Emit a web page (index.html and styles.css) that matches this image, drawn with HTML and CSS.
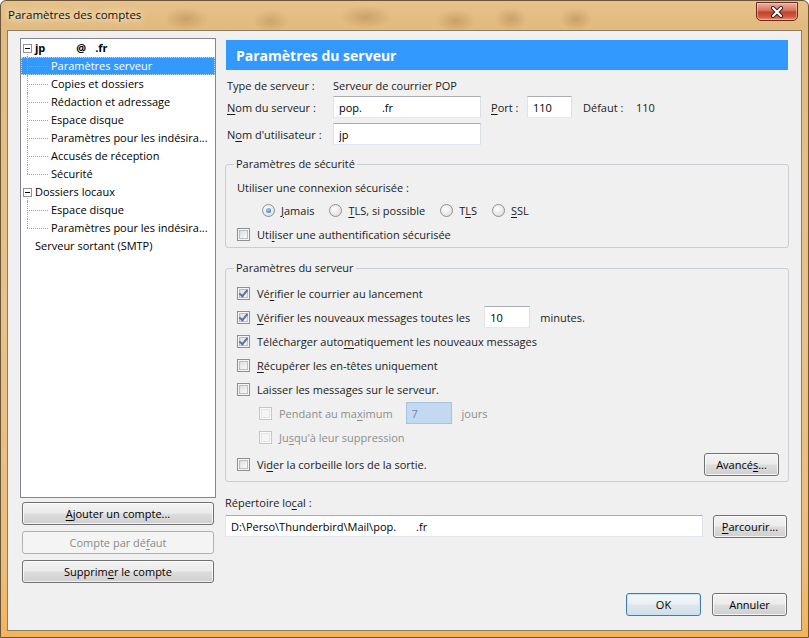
FILE: index.html
```html
<!DOCTYPE html>
<html lang="fr">
<head>
  <meta charset="UTF-8" />
  <title>Paramètres des comptes</title>
  <link rel="stylesheet" href="styles.css">
</head>
<body>
  <div class="window">
    <!-- barre de titre -->
    <div class="titlebar">
      <span class="title">Paramètres des comptes</span>
      <span class="close">
        <svg width="14" height="12" viewBox="0 0 14 12">
          <path d="M3 2 L11 10 M11 2 L3 10" stroke="#3a1a14" stroke-width="4" stroke-linecap="round"/>
          <path d="M3 2 L11 10 M11 2 L3 10" stroke="#fff" stroke-width="2.2" stroke-linecap="round"/>
        </svg>
      </span>
    </div>

    <div class="client">
      <!-- colonne de gauche : arbre des comptes -->
      <div class="side">
        <div class="tree">
          <div class="node account"><span class="toggle"></span>jp<span class="blank-name"></span>@<span class="blank-dom"></span>.fr</div>
          <ul class="children">
            <li class="selected">Paramètres serveur</li>
            <li>Copies et dossiers</li>
            <li>Rédaction et adressage</li>
            <li>Espace disque</li>
            <li>Paramètres pour les indésira...</li>
            <li>Accusés de réception</li>
            <li>Sécurité</li>
          </ul>
          <div class="node"><span class="toggle"></span>Dossiers locaux</div>
          <ul class="children">
            <li>Espace disque</li>
            <li>Paramètres pour les indésira...</li>
          </ul>
          <div class="node leaf">Serveur sortant (SMTP)</div>
        </div>
        <button class="btn side-btn first"><u>A</u>jouter un compte...</button>
        <button class="btn side-btn" disabled>Compte par dé<u>f</u>aut</button>
        <button class="btn side-btn">Supprim<u>e</u>r le compte</button>
      </div>

      <!-- colonne de droite : paramètres -->
      <div class="main">
        <div class="header">Paramètres du serveur</div>

        <div class="info">
          <span class="lbl">Type de serveur :</span>
          <span>Serveur de courrier POP</span>
        </div>
        <div class="form-row first">
          <span class="lbl"><u>N</u>om du serveur :</span>
          <input class="field host" type="text" value="pop.       .fr">
          <span class="port-lbl"><u>P</u>ort :</span>
          <input class="field port" type="text" value="110">
          <span class="def-lbl">Défaut :</span>
          <span>110</span>
        </div>
        <div class="form-row">
          <span class="lbl">N<u>o</u>m d'utilisateur :</span>
          <input class="field host" type="text" value="jp">
        </div>

        <fieldset class="group security">
          <legend>Paramètres de sécurité</legend>
          <div class="sec-label">Utiliser une connexion sécurisée :</div>
          <div class="radios">
            <span class="opt"><span class="radio on"></span><u>J</u>amais</span>
            <span class="opt"><span class="radio"></span><u>T</u>LS, si possible</span>
            <span class="opt"><span class="radio"></span>T<u>L</u>S</span>
            <span class="opt"><span class="radio"></span><u>S</u>SL</span>
          </div>
          <div class="line sec-check"><span class="check"></span>Uti<u>l</u>iser une authentification sécurisée</div>
        </fieldset>

        <fieldset class="group server">
          <legend>Paramètres du serveur</legend>
          <div class="line"><span class="check on"></span>Vé<u>r</u>ifier le courrier au lancement</div>
          <div class="line"><span class="check on"></span><u>V</u>érifier les nouveaux messages toutes les
            <input class="field minutes" type="text" value="10"><span class="unit">minutes.</span></div>
          <div class="line"><span class="check on"></span>Télécharger auto<u>m</u>atiquement les nouveaux messages</div>
          <div class="line"><span class="check"></span><u>R</u>écupérer les en-têtes uniquement</div>
          <div class="line"><span class="check"></span>Laisser les messa<u>g</u>es sur le serveur.</div>
          <div class="line sub off"><span class="check"></span>Pendant au ma<u>x</u>imum
            <input class="field days" type="text" value="7" disabled><span class="unit">jours</span></div>
          <div class="line sub off"><span class="check"></span>Ju<u>s</u>qu'à leur suppression</div>
          <div class="line last"><span class="check"></span>Vi<u>d</u>er la corbeille lors de la sortie.
            <button class="btn advanced">Avancé<u>s</u>...</button></div>
        </fieldset>

        <div class="dir-label">Répertoire lo<u>c</u>al :</div>
        <div class="dir-row">
          <input class="field path" type="text" value="D:\Perso\Thunderbird\Mail\pop.       .fr">
          <button class="btn browse"><u>P</u>arcourir...</button>
        </div>

        <div class="footer">
          <button class="btn default">OK</button>
          <button class="btn">Annuler</button>
        </div>
      </div>
    </div>
  </div>
</body>
</html>
```

FILE: styles.css
```css
* {
    box-sizing: border-box;
}
body {
    margin: 0;
    font-family: "Open Sans", "Noto Sans", sans-serif;
    font-size: 11px;
    color: #1b1b1b;
}
u {
    text-decoration-thickness: 1px;
    text-underline-offset: 2px;
}

/* cadre de la fenetre */
.window {
    width: 809px;
    height: 638px;
    display: flex;
    flex-direction: column;
    padding: 0 6px 6px;
    border: 1px solid #6c5538;
    border-radius: 6px 6px 0 0;
    background:
        radial-gradient(ellipse 22px 12px at 185px 18px, rgba(140, 100, 50, 0.3), transparent),
        radial-gradient(ellipse 18px 12px at 270px 20px, rgba(140, 100, 50, 0.25), transparent),
        radial-gradient(ellipse 26px 12px at 365px 16px, rgba(140, 100, 50, 0.3), transparent),
        radial-gradient(ellipse 20px 12px at 455px 20px, rgba(140, 100, 50, 0.3), transparent),
        radial-gradient(ellipse 16px 12px at 510px 18px, rgba(140, 100, 50, 0.3), transparent),
        radial-gradient(ellipse 16px 12px at 575px 18px, rgba(140, 100, 50, 0.3), transparent),
        linear-gradient(180deg, #e6c38c 0%, #e2bb80 22px, #e8c28a 50%, #ecbd78 90%, #f3b45a 100%);
}
.titlebar {
    height: 29px;
    display: flex;
    align-items: center;
    justify-content: space-between;
    padding: 0 4px 0 1px;
}
.title {
    font-size: 11.5px;
    color: #111;
    text-shadow: 0 0 6px #fff5e0, 0 0 10px #fff5e0;
    margin-top: -2px;
}
.close {
    width: 42px;
    height: 19px;
    margin-top: -8px;
    display: flex;
    align-items: center;
    justify-content: center;
    border: 1px solid #6a2a1e;
    border-radius: 0 0 5px 5px;
    background: linear-gradient(180deg, #eab0a2 0%, #d97964 40%, #c2442c 55%, #cf5a3c 80%, #e59170 100%);
    box-shadow: inset 0 0 0 1px rgba(255, 220, 200, 0.5);
}

/* zone cliente */
.client {
    flex: 1;
    display: flex;
    gap: 9px;
    padding: 7px 12px 14px 12px;
    background: #f0f0f0;
    border: 1px solid #8b7c62;
}
.side {
    width: 196px;
    display: flex;
    flex-direction: column;
}
.tree {
    height: 460px;
    background: #fff;
    border: 1px solid #828790;
    line-height: 18px;
    color: #000;
}
.node {
    height: 18px;
    display: flex;
    align-items: center;
    padding-left: 2px;
    position: relative;
}
.node.leaf {
    padding-left: 14px;
}
.account {
    font-weight: bold;
}
.blank-name {
    display: inline-block;
    width: 31px;
}
.blank-dom {
    display: inline-block;
    width: 9px;
}
.toggle {
    width: 9px;
    height: 9px;
    border: 1px solid #919191;
    margin-right: 3px;
    position: relative;
    background: #fff;
}
.toggle::after {
    content: "";
    position: absolute;
    left: 1px;
    top: 3px;
    width: 5px;
    height: 1px;
    background: #000;
}
.node:not(.leaf)::after {
    content: "";
    position: absolute;
    left: 6px;
    top: 13px;
    height: 5px;
    border-left: 1px dotted #a0a0a0;
}
.children {
    list-style: none;
    margin: 0;
    padding: 0;
}
.children li {
    height: 18px;
    padding-left: 30px;
    position: relative;
    white-space: nowrap;
}
.children li::before {
    content: "";
    position: absolute;
    left: 6px;
    top: 9px;
    width: 21px;
    border-top: 1px dotted #a0a0a0;
}
.children li::after {
    content: "";
    position: absolute;
    left: 6px;
    top: 0;
    height: 18px;
    border-left: 1px dotted #a0a0a0;
}
.children li:last-child::after {
    height: 9px;
}
.children li.selected {
    background: #3399ff;
    color: #fff;
    outline: 1px dotted #bcdcff;
    outline-offset: -1px;
}

/* boutons */
.btn {
    height: 23px;
    padding: 0 6px;
    font: inherit;
    color: #000;
    border: 1px solid #707070;
    border-radius: 3px;
    background: linear-gradient(180deg, #f3f3f3 0%, #ebebeb 48%, #dddddd 52%, #cfcfcf 100%);
    box-shadow: inset 0 0 0 1px rgba(255, 255, 255, 0.75);
}
.btn:disabled {
    color: #8a8a8a;
    border-color: #adb2b5;
    background: #f4f4f4;
    box-shadow: none;
}
.btn.default {
    border-color: #3c7fb1;
    background: linear-gradient(180deg, #f4f8fb 0%, #e9eff4 48%, #dde6ed 52%, #d3dee7 100%);
    box-shadow: inset 0 0 0 1px #c4e5f6;
}
.side-btn {
    margin: 6px 2px 0;
}
.side-btn.first {
    margin-top: 4px;
}

/* partie droite */
.main {
    flex: 1;
    display: flex;
    flex-direction: column;
}
.header {
    height: 30px;
    margin: 2px 1px 0;
    padding-left: 10px;
    display: flex;
    align-items: center;
    background: #3399ff;
    color: #fff;
    font-size: 14px;
    font-weight: bold;
}
.info {
    margin-top: 8px;
    height: 16px;
    line-height: 16px;
    padding-left: 2px;
    display: flex;
}
.lbl {
    width: 106px;
    flex: none;
}
.form-row {
    display: flex;
    align-items: center;
    height: 22px;
    margin-top: 5px;
    padding-left: 2px;
}
.form-row.first {
    margin-top: 2px;
}
.field {
    height: 22px;
    padding: 0 5px;
    font: inherit;
    color: #000;
    background: #fff;
    border: 1px solid;
    border-color: #abadb3 #dbdfe6 #e3e9ef #e2e3ea;
    outline: none;
    white-space: pre;
}
.host {
    width: 148px;
}
.port-lbl {
    margin-left: 10px;
    width: 36px;
}
.port {
    width: 45px;
}
.def-lbl {
    margin-left: 11px;
    width: 53px;
}

/* groupes */
.group {
    margin: 11px 0 0;
    padding: 0 9px 5px 11px;
    border: 1px solid #c8ced3;
    border-radius: 3px;
    min-width: 0;
}
.group legend {
    padding: 0 2px;
    margin-left: -3px;
    line-height: 16px;
}
.sec-label {
    margin-top: 8px;
    line-height: 16px;
}
.radios {
    margin-top: 6px;
    height: 16px;
    padding-left: 25px;
    display: flex;
    align-items: center;
}
.opt {
    display: flex;
    align-items: center;
    margin-right: 15px;
}
.radio {
    width: 13px;
    height: 13px;
    margin-right: 6px;
    border: 1px solid #8e8f8f;
    border-radius: 50%;
    background: radial-gradient(circle at 40% 35%, #ffffff, #d6d6d6);
    position: relative;
}
.radio.on::after {
    content: "";
    position: absolute;
    left: 3px;
    top: 3px;
    width: 5px;
    height: 5px;
    border-radius: 50%;
    background: radial-gradient(circle at 40% 35%, #9fd3fb, #2a66b8);
}
.line {
    height: 24px;
    display: flex;
    align-items: center;
    white-space: nowrap;
}
.sec-check {
    margin-top: 8px;
    height: 16px;
}
.server {
    margin-top: 12px;
    padding-top: 5px;
    padding-bottom: 2px;
}
.line.sub {
    padding-left: 22px;
}
.line.off {
    color: #8d8d8d;
}
.line.last {
    height: 30px;
}
.check {
    width: 13px;
    height: 13px;
    margin-right: 7px;
    flex: none;
    border: 1px solid #8e8f8f;
    background: linear-gradient(135deg, #d3d6da 0%, #f4f5f6 70%, #fbfbfb 100%);
    box-shadow: inset 0 0 0 1px #f6f6f6, inset 0 0 0 2px #b9bec3;
    position: relative;
}
.off .check {
    border-color: #c6c6c6;
    background: #f6f6f6;
    box-shadow: inset 0 0 0 1px #fbfbfb, inset 0 0 0 2px #e4e4e4;
}
.check.on::after {
    content: "";
    position: absolute;
    left: 3px;
    top: 0;
    width: 3px;
    height: 7px;
    border-right: 2px solid #5a6fa4;
    border-bottom: 2px solid #5a6fa4;
    transform: rotate(40deg);
}
.minutes {
    width: 46px;
    margin-left: 14px;
}
.days {
    width: 46px;
    margin-left: 13px;
    background: #c3d9f1;
    border-color: #a9c2df;
    color: #6b86ad;
}
.unit {
    margin-left: 10px;
}
.advanced {
    margin-left: auto;
    width: 75px;
}

/* repertoire local */
.dir-label {
    margin-top: 13px;
    line-height: 16px;
}
.dir-row {
    display: flex;
    margin-top: 4px;
    padding-right: 2px;
}
.path {
    flex: 1;
}
.browse {
    width: 74px;
    margin-left: 10px;
}
.footer {
    margin-top: auto;
    display: flex;
    justify-content: flex-end;
    gap: 11px;
    padding-right: 2px;
}
.footer .btn {
    width: 75px;
}
```
